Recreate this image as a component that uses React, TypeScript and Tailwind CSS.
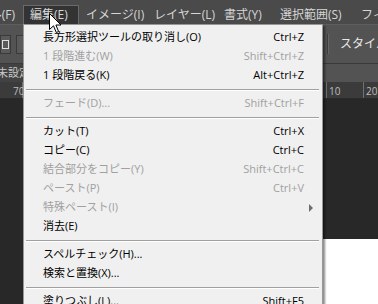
import React from 'react';

type Item =
  | { kind: 'item'; label: string; shortcut?: string; disabled?: boolean; submenu?: boolean }
  | { kind: 'sep' };

const items: Item[] = [
  { kind: 'item', label: '長方形選択ツールの取り消し(O)', shortcut: 'Ctrl+Z' },
  { kind: 'item', label: '1 段階進む(W)', shortcut: 'Shift+Ctrl+Z', disabled: true },
  { kind: 'item', label: '1 段階戻る(K)', shortcut: 'Alt+Ctrl+Z' },
  { kind: 'sep' },
  { kind: 'item', label: 'フェード(D)...', shortcut: 'Shift+Ctrl+F', disabled: true },
  { kind: 'sep' },
  { kind: 'item', label: 'カット(T)', shortcut: 'Ctrl+X' },
  { kind: 'item', label: 'コピー(C)', shortcut: 'Ctrl+C' },
  { kind: 'item', label: '結合部分をコピー(Y)', shortcut: 'Shift+Ctrl+C', disabled: true },
  { kind: 'item', label: 'ペースト(P)', shortcut: 'Ctrl+V', disabled: true },
  { kind: 'item', label: '特殊ペースト(I)', disabled: true, submenu: true },
  { kind: 'item', label: '消去(E)' },
  { kind: 'sep' },
  { kind: 'item', label: 'スペルチェック(H)...' },
  { kind: 'item', label: '検索と置換(X)...' },
  { kind: 'sep' },
  { kind: 'item', label: '塗りつぶし(L)...', shortcut: 'Shift+F5' },
];

const menuBar = [
  { label: 'ファイル(F)', w: 'w-[23px]', first: true },
  { label: '編集(E)', w: 'w-[56px]', active: true },
  { label: 'イメージ(I)', w: 'w-[68px]' },
  { label: 'レイヤー(L)', w: 'w-[70px]' },
  { label: '書式(Y)', w: 'w-[56px]' },
  { label: '選択範囲(S)', w: 'w-[81px]' },
  { label: 'フィルター(T)', w: 'w-[80px]' },
];

const Cursor = () => (
  <svg className="absolute left-[49px] top-[13px]" width="13" height="21" viewBox="0 0 13 21">
    <path
      d="M0.5 0.5 L0.5 16.5 L4.5 12.8 L7.3 19.5 L9.6 18.5 L6.9 12 L12 12 Z"
      fill="#ffffff"
      stroke="#000000"
      strokeWidth="1"
      strokeLinejoin="miter"
    />
  </svg>
);

const App: React.FC = () => {
  return (
    <div
      className="relative w-[378px] h-[304px] overflow-hidden bg-[#282828] flex flex-col"
      style={{ fontFamily: '"Open Sans", "Noto Sans CJK JP", sans-serif' }}
    >
      {/* menu bar */}
      <div className="h-[24px] bg-[#4a4a4a] flex text-[12px] text-[#d6d6d6] whitespace-nowrap shrink-0">
        {menuBar.map((m) => (
          <div
            key={m.label}
            className={
              m.first
                ? `${m.w} shrink-0 overflow-hidden flex justify-end items-center pt-[5px] pr-[8px]`
                : m.active
                ? `${m.w} shrink-0 mt-[5px] bg-[#333333] border border-[#6a6a6a] border-b-0 flex items-center pl-[6px]`
                : `${m.w} shrink-0 flex items-center pl-[7px] pt-[5px]`
            }
          >
            <span className="shrink-0">{m.label}</span>
          </div>
        ))}
      </div>

      {/* options bar */}
      <div className="h-[39px] bg-[#535353] border-t border-[#5e5e5e] flex items-center shrink-0">
        <div className="w-[11px] h-[19px] border border-[#3a3a3a] bg-[#5a5a5a] flex items-center pl-[1px]">
          <div className="w-[7px] h-[9px] border border-[#e0e0e0]" />
        </div>
        <div className="ml-[5px] w-[10px] h-[19px] border border-[#3a3a3a] bg-[#5a5a5a]" />
        <div className="ml-auto w-[2px] h-[20px] border-l border-[#3c3c3c] border-r border-r-[#666666]" />
        <div className="ml-[11px] w-[38px] text-[12px] text-[#e8e8e8] whitespace-nowrap overflow-hidden">スタイル</div>
      </div>

      {/* tab row */}
      <div className="h-[19px] bg-[#535353] border-t border-[#3a3a3a] flex shrink-0">
        <div className="w-[80px] bg-[#424242] text-[11px] text-[#c8c8c8] flex items-center whitespace-nowrap overflow-hidden">
          <span className="ml-[-3px]">未設定</span>
        </div>
      </div>

      {/* ruler */}
      <div className="h-[17px] bg-[#3b3b3b] border-b border-[#2a2a2a] flex shrink-0 text-[10px] text-[#bdbdbd] leading-none">
        <div className="w-[23px] flex items-end pb-[2px] pl-[13px] border-r border-[#707070]">70</div>
        <div className="w-[304px] border-r border-[#707070]" />
        <div className="w-[37px] flex items-end pb-[2px] pl-[2px] border-r border-[#707070]">10</div>
        <div className="flex items-end pb-[2px] pl-[2px]">20</div>
      </div>

      {/* canvas */}
      <div className="flex-1 flex flex-col pl-[200px] pt-[140px]">
        <div className="flex-1 bg-white" />
      </div>

      {/* edit menu */}
      <div className="absolute left-[23px] top-[24px] w-[300px] bg-[#f0f0f0] border border-[#979797] pt-[3px] pb-[3px] shadow-[2px_2px_2px_rgba(0,0,0,0.45)] text-[11px] text-black">
        {items.map((it, i) =>
          it.kind === 'sep' ? (
            <div key={i} className="h-[9px] flex items-center pl-[2px] pr-[3px]">
              <div className="w-full h-[2px] border-t border-[#a0a0a0] border-b border-b-white" />
            </div>
          ) : (
            <div
              key={i}
              className={`h-[19px] flex items-center pl-[19px] pr-[18px] whitespace-nowrap ${
                it.disabled ? 'text-[#a0a0a0]' : 'text-black'
              }`}
            >
              <span>{it.label}</span>
              {it.shortcut && <span className="ml-auto">{it.shortcut}</span>}
              {it.submenu && (
                <span className="ml-auto mr-[-9px] w-0 h-0 border-y-[4px] border-y-transparent border-l-[4px] border-l-[#6e6e6e]" />
              )}
            </div>
          )
        )}
      </div>

      <Cursor />
    </div>
  );
};

export default App;
